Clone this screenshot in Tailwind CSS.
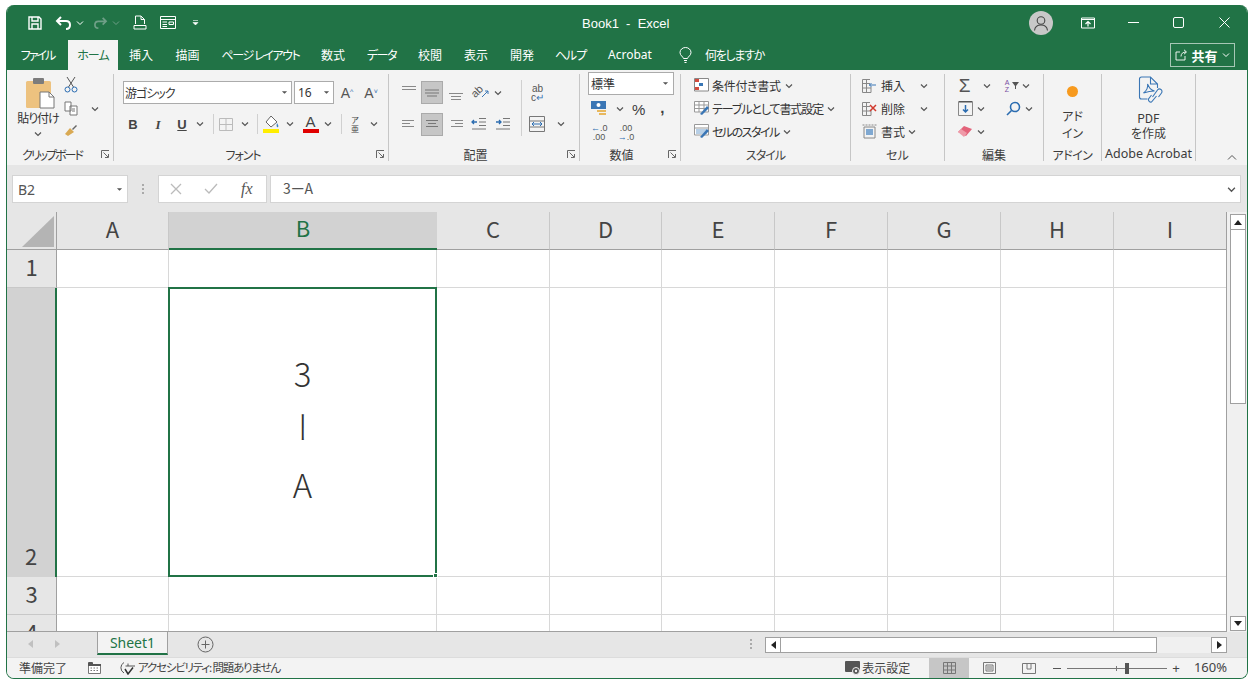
<!DOCTYPE html>
<html lang="ja">
<head>
  <meta charset="UTF-8" />
  <title>Book1 - Excel</title>
  <script src="https://cdn.jsdelivr.net/npm/@tailwindcss/browser@4"></script>
</head>
<body class="bg-white w-[1255px] h-[686px] overflow-hidden font-['Noto_Sans_CJK_JP','Noto_Sans',sans-serif] [font-feature-settings:'palt'] text-[#3c3c3c] text-[12px]">
  <svg class="hidden">
    <symbol id="chev" viewBox="0 0 8 8"><path d="M1 2.5 4 5.5 7 2.5" fill="none" stroke="#555" stroke-width="1.2"/></symbol>
    <symbol id="chevw" viewBox="0 0 8 8"><path d="M1 2.5 4 5.5 7 2.5" fill="none" stroke="#fff" stroke-width="1"/></symbol>
    <symbol id="chevd" viewBox="0 0 8 8"><path d="M1 2.5 4 5.5 7 2.5" fill="none" stroke="#6f9f87" stroke-width="1"/></symbol>
    <symbol id="tri" viewBox="0 0 8 8"><path d="M1 2.5H7L4 5.5Z" fill="#555"/></symbol>
    <symbol id="launcher" viewBox="0 0 9 9"><path d="M.5 8V.5H8M2.5 2.5 7 7M4 7.5H7.5V4" fill="none" stroke="#666"/></symbol>
  </svg>

  <div class="ml-[6px] mt-[5px] w-[1242px] h-[674px] rounded-[8px] overflow-hidden border-x border-b border-[#217346] flex flex-col bg-[#e6e6e6]">

    <!-- Title bar -->
    <div class="h-[35px] bg-[#217346] flex items-center text-white relative shrink-0">
      <div class="flex items-center pl-[21px]">
        <svg class="w-[14px] h-[14px]" viewBox="0 0 14 14" fill="none" stroke="#fff" stroke-width="1.4"><path d="M1 1H11L13 3V13H1ZM4 1V5H10V1M4 13V8H10V13"/></svg>
        <svg class="w-[17px] h-[14px] ml-[13px]" viewBox="0 0 17 14" fill="none" stroke="#fff" stroke-width="2"><path d="M6 1 2 5 6 9M2 5H11C14 5 15 7 15 9S14 13 11 13"/></svg>
        <svg class="w-[8px] h-[8px] ml-[4px]"><use href="#chevw"/></svg>
        <svg class="w-[15px] h-[12px] ml-[9px]" viewBox="0 0 17 14" fill="none" stroke="#6f9f87" stroke-width="2"><path d="M11 1 15 5 11 9M15 5H6C3 5 2 7 2 9S3 13 6 13"/></svg>
        <svg class="w-[8px] h-[8px] ml-[4px]"><use href="#chevd"/></svg>
        <svg class="w-[14px] h-[15px] ml-[13px]" viewBox="0 0 14 15" fill="none" stroke="#fff"><path d="M2.5 9V1H8L11.5 4.5V9M8 1V4.5H11.5M1 10.500H13V14H1Z"/></svg>
        <svg class="w-[16px] h-[13px] ml-[13px]" viewBox="0 0 16 13" fill="none" stroke="#fff"><path d="M.5.5H15.500V12.500H.5ZM.5 3.500H15.500M2.500 6H7M9 6H13.500V8.500H9ZM2.500 8.500H7M2.500 10.500H7"/></svg>
        <svg class="w-[7px] h-[7px] ml-[16px]" viewBox="0 0 7 7"><path d="M1 1.500H6M1 3.500H6L3.500 6Z" fill="#fff" stroke="#fff" stroke-width=".6"/></svg>
      </div>
      <div class="absolute left-[575px] top-[10px] text-[13px] leading-[18px] font-['Liberation_Sans',sans-serif] whitespace-pre">Book1  -  Excel</div>
      <div class="ml-auto flex items-center">
        <div class="w-[24px] h-[24px] rounded-full bg-[#c8c8c8] flex items-center justify-center">
          <svg class="w-[16px] h-[16px]" viewBox="0 0 16 16" fill="none" stroke="#444" stroke-width="1.100"><circle cx="8" cy="5.500" r="3.800"/><path d="M1.500 15.500C2 11.500 5 10 8 10S14 11.500 14.500 15.500"/></svg>
        </div>
        <svg class="w-[14px] h-[12px] ml-[28px]" viewBox="0 0 14 12" fill="none" stroke="#fff"><path d="M.5 1H13.500V11H.5ZM.5 2.500H13.500"/><path d="M7 9.500V5M4.500 7 7 4.500 9.500 7" stroke-width="1.200"/></svg>
        <div class="w-[11px] h-px bg-white ml-[33px]"></div>
        <div class="w-[11px] h-[11px] border border-white rounded-[2px] ml-[34px]"></div>
        <svg class="w-[11px] h-[11px] ml-[35px] mr-[17px]" viewBox="0 0 11 11" stroke="#fff"><path d="M.5.5 10.500 10.500M10.500.5.5 10.500"/></svg>
      </div>
    </div>

    <!-- Tabs -->
    <div class="h-[30px] bg-[#217346] flex text-white text-[12px] leading-[30px] text-center shrink-0 relative">
      <div class="w-[61px] tracking-[-2px]">ファイル</div>
      <div class="w-[50px] bg-[#f3f3f3] text-[#217346] tracking-[-1px]">ホーム</div>
      <div class="w-[46px]">挿入</div>
      <div class="w-[47px]">描画</div>
      <div class="w-[99px] whitespace-nowrap tracking-[-1.4px]">ページ レイアウト</div>
      <div class="w-[46px]">数式</div>
      <div class="w-[51px] tracking-[-1.500px]">データ</div>
      <div class="w-[46px]">校閲</div>
      <div class="w-[46px]">表示</div>
      <div class="w-[46px]">開発</div>
      <div class="w-[51px] tracking-[-1px]">ヘルプ</div>
      <div class="w-[68px] font-['Noto_Sans',sans-serif]">Acrobat</div>
      <div class="flex items-center ml-[15px]">
        <svg class="w-[13px] h-[16px]" viewBox="0 0 13 16" fill="none" stroke="#fff"><path d="M4.500 11.500C4 9.500 1 8.500 1 5.500A5.500 5 0 0 1 12 5.500C12 8.500 9 9.500 8.500 11.500ZM5 13.500H8M5.500 15.500H7.500"/></svg>
        <span class="ml-[13px] tracking-[-1.300px]">何をしますか</span>
      </div>
      <div class="ml-auto mr-[12px] mt-[3px] w-[65px] h-[24px] border border-white/60 flex items-center justify-center leading-none">
        <svg class="w-[13px] h-[12px]" viewBox="0 0 13 12" fill="none" stroke="#fff" stroke-width=".9"><path d="M5 3H1V11H10V7M6 7.500C6 4.500 8 3 11 3M9 .8 11.500 3 9 5.200"/></svg>
        <span class="text-[13px] font-bold ml-[3px]">共有</span>
        <svg class="w-[8px] h-[8px] ml-[4px]"><use href="#chevw"/></svg>
      </div>
    </div>

    <!-- Ribbon -->
    <div class="h-[95px] bg-[#f3f3f3] flex shrink-0 relative leading-none">

      <!-- clipboard -->
      <div class="w-[107px] shrink-0 border-r border-[#c6c6c6] my-[4px] relative flex flex-col">
        <div class="flex h-[74px]">
          <div class="w-[62px] flex flex-col items-center">
            <svg class="w-[31px] h-[32px] mt-[3px] ml-[4px]" viewBox="0 0 31 32"><rect x="1" y="4" width="25" height="27" rx="1.500" fill="#edc27f"/><rect x="8" y="1" width="11" height="6" rx="1" fill="#7c7c7c"/><path d="M15 15H24L29 20V31H15Z" fill="#fff" stroke="#777"/><path d="M24 15V20H29" fill="none" stroke="#777"/></svg>
            <div class="text-[12px] mt-[3px] text-[#333] whitespace-nowrap tracking-[-1px]">貼り付け</div>
            <svg class="w-[8px] h-[8px] mt-[6px]"><use href="#chev"/></svg>
          </div>
          <div class="flex flex-col items-center w-[14px] -ml-[5px]">
            <svg class="w-[14px] h-[17px] mt-[2px]" viewBox="0 0 14 17" fill="none" stroke="#555"><path d="M3 1 9.500 11M11 1 4.500 11"/><circle cx="3.500" cy="13.500" r="2.500" stroke="#2b6cb0"/><circle cx="10.500" cy="13.500" r="2.500" stroke="#2b6cb0"/></svg>
            <svg class="w-[14px] h-[15px] mt-[8px]" viewBox="0 0 14 15" fill="none" stroke="#777"><path d="M1 1H7V10H1ZM6 5H13V14H6Z" fill="#fff"/><path d="M8 8H11M8 10H11"/></svg>
            <svg class="w-[14px] h-[13px] mt-[8px]" viewBox="0 0 14 13"><path d="M8 5 12 1 13 2 9 6Z" fill="#666"/><path d="M1 10 6 4 10 8 4 12Z" fill="#d9a953"/></svg>
          </div>
          <svg class="w-[8px] h-[8px] mt-[31px] ml-[13px]"><use href="#chev"/></svg>
        </div>
        <div class="absolute -bottom-[2px] left-0 right-0 h-[17px] flex items-center">
          <span class="ml-[15px] text-[12px] tracking-[-2px] whitespace-nowrap">クリップボード</span>
        </div>
        <svg class="w-[9px] h-[9px] absolute right-[3px] bottom-[2px]"><use href="#launcher"/></svg>
      </div>

      <!-- font -->
      <div class="w-[275px] shrink-0 border-r border-[#c6c6c6] my-[4px] relative">
        <div class="flex items-center h-[23px] mt-[7px] pl-[9px]">
          <div class="w-[169px] h-[23px] bg-white border border-[#ababab] flex items-center pl-[1px] text-[12px] text-[#333] tracking-[-1px]">游ゴシック<svg class="w-[7px] h-[7px] ml-auto mr-[3px]"><use href="#tri"/></svg></div>
          <div class="w-[40px] h-[23px] ml-[2px] bg-white border border-[#ababab] flex items-center pl-[3px] text-[12px] font-['Noto_Sans',sans-serif] text-[#333]">16<svg class="w-[7px] h-[7px] ml-auto mr-[3px]"><use href="#tri"/></svg></div>
          <div class="w-[24px] ml-[1px] text-center text-[14px] text-[#555] font-['Liberation_Sans',sans-serif]">A<sup class="text-[7px] text-[#2b6cb0]">^</sup></div>
          <div class="w-[24px] text-center text-[14px] text-[#555] font-['Liberation_Sans',sans-serif]">A<sup class="text-[7px] text-[#2b6cb0]">˅</sup></div>
        </div>
        <div class="flex items-center h-[24px] mt-[8px] pl-[9px] font-['Liberation_Sans',sans-serif] text-[13px] text-[#444]">
          <div class="w-[20px] text-center font-bold">B</div>
          <div class="w-[24px] text-center font-['Liberation_Serif',serif] italic font-bold ml-[3px]">I</div>
          <div class="w-[24px] text-center underline font-bold">U</div>
          <svg class="w-[8px] h-[8px] ml-[2px]"><use href="#chev"/></svg>
          <div class="w-px h-[20px] bg-[#d0d0d0] ml-[9px]"></div>
          <svg class="w-[14px] h-[13px] ml-[5px]" viewBox="0 0 14 13" fill="none" stroke="#bbb"><path d="M.5.5H13.500V12.500H.5ZM7 .5V12.500M.5 6.500H13.500"/></svg>
          <svg class="w-[8px] h-[8px] ml-[8px]"><use href="#chev"/></svg>
          <div class="w-px h-[20px] bg-[#d0d0d0] ml-[8px]"></div>
          <svg class="w-[17px] h-[18px] ml-[5px]" viewBox="0 0 17 18"><path d="M8 1 14 7 8 12 3 7Z" fill="#fff" stroke="#666"/><path d="M14 8C15 10 16 11 15 12S13 11 14 8Z" fill="#3b82c4"/><rect y="14" width="16" height="4" fill="#ffee00"/></svg>
          <svg class="w-[8px] h-[8px] ml-[6px]"><use href="#chev"/></svg>
          <div class="w-[17px] ml-[8px] flex flex-col items-center text-[15px] leading-[14px]">A<div class="w-[16px] h-[4px] bg-[#e00000]"></div></div>
          <svg class="w-[8px] h-[8px] ml-[5px]"><use href="#chev"/></svg>
          <div class="w-px h-[20px] bg-[#d0d0d0] ml-[9px]"></div>
          <div class="w-[10px] ml-[8px] text-center text-[8px] leading-[9px] font-['Noto_Sans_CJK_JP']">ア<br>亜</div>
          <svg class="w-[8px] h-[8px] ml-[10px]"><use href="#chev"/></svg>
        </div>
        <div class="absolute -bottom-[2px] left-0 right-0 h-[17px] flex items-center justify-center text-[12px] pr-[16px] tracking-[-1px]">フォント</div>
        <svg class="w-[9px] h-[9px] absolute right-[3px] bottom-[2px]"><use href="#launcher"/></svg>
      </div>

      <!-- alignment -->
      <div class="w-[191px] shrink-0 border-r border-[#c6c6c6] my-[4px] relative">
        <div class="flex items-center h-[23px] mt-[7px] pl-[8px]">
          <svg class="w-[16px] h-[12px] ml-[4px] mb-[4px]" viewBox="0 0 16 12" stroke="#888"><path d="M1 1.500H15M1 4.500H15"/></svg>
          <div class="w-[22px] h-[23px] bg-[#c6c6c6] border border-[#aaa] ml-[4px] flex items-center justify-center"><svg class="w-[16px] h-[10px]" viewBox="0 0 16 10" stroke="#777"><path d="M1 2H15M1 5H15M3 8H13"/></svg></div>
          <svg class="w-[16px] h-[12px] ml-[5px] mt-[5px]" viewBox="0 0 16 12" stroke="#888"><path d="M1 4.500H15M3 7.500H13M3 10.500H13"/></svg>
          <div class="w-[18px] h-[16px] ml-[8px] relative">
            <span class="absolute left-[-1px] top-[1px] text-[11px] -rotate-45 font-['Liberation_Sans',sans-serif] text-[#555]">ab</span>
            <svg class="absolute left-0 top-0 w-[18px] h-[16px]" viewBox="0 0 18 16" fill="none" stroke="#3a76b5"><path d="M10 12 16 6M13 6H16V9"/></svg>
          </div>
          <svg class="w-[8px] h-[8px] ml-[4px]"><use href="#chev"/></svg>
          <div class="w-px h-[56px] bg-[#d0d0d0] ml-[19px] mt-[31px] shrink-0"></div>
          <div class="ml-[9px] text-[10px] leading-[9px] font-['Liberation_Sans',sans-serif] text-center text-[#555]">ab<br>c<span class="text-[#3a76b5]">↵</span></div>
        </div>
        <div class="flex items-center h-[24px] mt-[8px] pl-[8px]">
          <svg class="w-[16px] h-[10px] ml-[4px]" viewBox="0 0 16 10" stroke="#888"><path d="M1 1.500H13M1 4.500H9M1 7.500H13"/></svg>
          <div class="w-[22px] h-[23px] bg-[#c6c6c6] border border-[#aaa] ml-[4px] flex items-center justify-center"><svg class="w-[14px] h-[10px]" viewBox="0 0 14 10" stroke="#777"><path d="M1 1.500H13M3 4.500H11M1 7.500H13"/></svg></div>
          <svg class="w-[16px] h-[10px] ml-[5px]" viewBox="0 0 16 10" stroke="#888"><path d="M3 1.500H15M7 4.500H15M3 7.500H15"/></svg>
          <svg class="w-[16px] h-[14px] ml-[7px]" viewBox="0 0 16 14" stroke="#777" fill="none"><path d="M8 1.500H15M8 5H15M8 8.500H15M1 12H15"/><path d="M6 5H1M3 3 1 5 3 7" stroke="#2b6cb0" stroke-width="1.300"/></svg>
          <svg class="w-[16px] h-[14px] ml-[8px]" viewBox="0 0 16 14" stroke="#777" fill="none"><path d="M8 1.500H15M8 5H15M8 8.500H15M1 12H15"/><path d="M1 5H6M4 3 6 5 4 7" stroke="#2b6cb0" stroke-width="1.300"/></svg>
          <svg class="w-[16px] h-[16px] ml-[18px]" viewBox="0 0 16 16" fill="none" stroke="#777"><path d="M.5.5H15.500V15.500H.5ZM.5 5H15.500M.5 11H15.500"/><path d="M3 8H13M5 6 3 8 5 10M11 6 13 8 11 10" stroke="#2b6cb0"/></svg>
          <svg class="w-[8px] h-[8px] ml-[12px]"><use href="#chev"/></svg>
        </div>
        <div class="absolute -bottom-[2px] left-0 right-0 h-[17px] flex items-center justify-center text-[12px] pr-[17px]">配置</div>
        <svg class="w-[9px] h-[9px] absolute right-[3px] bottom-[2px]"><use href="#launcher"/></svg>
      </div>

      <!-- number -->
      <div class="w-[101px] shrink-0 border-r border-[#c6c6c6] my-[4px] relative">
        <div class="w-[86px] h-[23px] ml-[8px] -mt-[2px] bg-white border border-[#ababab] flex items-center pl-[2px] text-[12px] text-[#333]">標準<svg class="w-[7px] h-[7px] ml-auto mr-[4px]"><use href="#tri"/></svg></div>
        <div class="flex items-center h-[24px] mt-[2px] pl-[11px]">
          <svg class="w-[16px] h-[16px]" viewBox="0 0 16 16"><rect width="15" height="8" fill="#3a76b5"/><circle cx="7.500" cy="4" r="2" fill="#fff"/><rect x="6" y="9" width="9" height="2" fill="#e8b85e"/><rect x="8" y="12" width="7" height="2" fill="#e8b85e"/></svg>
          <svg class="w-[8px] h-[8px] ml-[9px]"><use href="#chev"/></svg>
          <span class="ml-[8px] text-[15px] font-['Liberation_Sans',sans-serif]">%</span>
          <span class="ml-[15px] text-[15px] font-bold font-['Liberation_Sans',sans-serif] -mt-[4px]">,</span>
        </div>
        <div class="flex items-center h-[24px] pl-[11px] text-[9px] leading-[9px] font-['Liberation_Sans',sans-serif] text-[#555]">
          <div class="w-[16px] text-center whitespace-nowrap"><span class="text-[#2b6cb0]">←</span>.0<br>.00</div>
          <div class="w-[20px] ml-[9px] text-center whitespace-nowrap">.00<br><span class="text-[#2b6cb0]">→</span>.0</div>
        </div>
        <div class="absolute -bottom-[2px] left-0 right-0 h-[17px] flex items-center justify-center text-[12px] pr-[17px]">数値</div>
        <svg class="w-[9px] h-[9px] absolute right-[3px] bottom-[2px]"><use href="#launcher"/></svg>
      </div>

      <!-- styles -->
      <div class="w-[170px] shrink-0 border-r border-[#c6c6c6] my-[4px] relative text-[12px] text-[#333]">
        <div class="flex items-center h-[23px] pl-[13px]">
          <svg class="w-[15px] h-[15px]" viewBox="0 0 15 15"><path d="M.5.5H14.500V13H.5Z" fill="#fff" stroke="#888"/><rect x="1" y="1" width="4" height="3" fill="#d24b3e"/><rect x="5" y="5" width="4" height="3" fill="#3a76b5"/><rect x="1" y="9" width="4" height="3" fill="#d24b3e"/></svg>
          <span class="ml-[3px] whitespace-nowrap tracking-[-.3px]">条件付き書式</span><svg class="w-[8px] h-[8px] ml-[4px]"><use href="#chev"/></svg>
        </div>
        <div class="flex items-center h-[23px] pl-[13px]">
          <svg class="w-[16px] h-[15px]" viewBox="0 0 16 15"><path d="M.5.5H14.500V11H.5ZM.5 4H14.500M.5 7.500H14.500M5 .5V11M10 .5V11" fill="#fff" stroke="#999"/><path d="M6 13 13 5 15 7 8 14Z" fill="#3a76b5"/></svg>
          <span class="ml-[2px] whitespace-nowrap tracking-[-1.100px]">テーブルとして書式設定</span><svg class="w-[8px] h-[8px] ml-[4px]"><use href="#chev"/></svg>
        </div>
        <div class="flex items-center h-[23px] pl-[13px]">
          <svg class="w-[16px] h-[15px]" viewBox="0 0 16 15"><path d="M.5.5H14.500V11H.5ZM.5 4H14.500" fill="#fff" stroke="#999"/><rect x="2" y="5" width="11" height="5" fill="#b7cfe6"/><path d="M6 13 13 5 15 7 8 14Z" fill="#3a76b5"/></svg>
          <span class="ml-[2px] whitespace-nowrap tracking-[-1.500px]">セルのスタイル</span><svg class="w-[8px] h-[8px] ml-[4px]"><use href="#chev"/></svg>
        </div>
        <div class="absolute -bottom-[2px] left-0 right-0 h-[17px] flex items-center justify-center text-[12px] text-[#444] tracking-[-1px]">スタイル</div>
      </div>

      <!-- cells -->
      <div class="w-[94px] shrink-0 border-r border-[#c6c6c6] my-[4px] relative text-[12px] text-[#333]">
        <div class="flex items-center h-[23px] pl-[11px]">
          <svg class="w-[15px] h-[14px]" viewBox="0 0 15 14" fill="none" stroke="#888"><path d="M.5.5H8M.5 4.500H8M.5.5V13.500H9V8M.5 9H9M4.500 .5V13.500"/><path d="M14 6H7M9.500 4 7.500 6 9.500 8" stroke="#3a76b5"/></svg>
          <span class="ml-[4px]">挿入</span><svg class="w-[8px] h-[8px] ml-[15px]"><use href="#chev"/></svg>
        </div>
        <div class="flex items-center h-[23px] pl-[11px]">
          <svg class="w-[15px] h-[14px]" viewBox="0 0 15 14" fill="none" stroke="#888"><path d="M.5.5H8M.5 4.500H8M.5.5V13.500H9V8M.5 9H9M4.500 .5V13.500"/><path d="M8 3 14 9M14 3 8 9" stroke="#d13a2e" stroke-width="1.500"/></svg>
          <span class="ml-[4px]">削除</span><svg class="w-[8px] h-[8px] ml-[15px]"><use href="#chev"/></svg>
        </div>
        <div class="flex items-center h-[23px] pl-[11px]">
          <svg class="w-[15px] h-[15px]" viewBox="0 0 15 15" fill="none" stroke="#888"><path d="M2 3H13V14H2Z"/><path d="M.5 1H14.500" stroke-dasharray="2 1"/><rect x="4" y="5" width="7" height="6" fill="#7fa8d1" stroke="none"/></svg>
          <span class="ml-[4px]">書式</span><svg class="w-[8px] h-[8px] ml-[3px]"><use href="#chev"/></svg>
        </div>
        <div class="absolute -bottom-[2px] left-0 right-0 h-[17px] flex items-center justify-center text-[12px] text-[#444]">セル</div>
      </div>

      <!-- editing -->
      <div class="w-[99px] shrink-0 border-r border-[#c6c6c6] my-[4px] relative">
        <div class="flex items-center h-[23px] pl-[12px]">
          <span class="w-[15px] text-[19px] text-center font-['Liberation_Sans',sans-serif] text-[#555]">Σ</span>
          <svg class="w-[8px] h-[8px] ml-[11px]"><use href="#chev"/></svg>
          <div class="w-[8px] ml-[12px] text-[7px] leading-[7px] text-[#7a4fa3] font-['Liberation_Sans',sans-serif] text-center">A<br>Z</div>
          <svg class="w-[7px] h-[7px] ml-[1px]" viewBox="0 0 7 7"><path d="M0 0H7L4 4V7H3V4Z" fill="#555"/></svg>
          <svg class="w-[8px] h-[8px] ml-[3px]"><use href="#chev"/></svg>
        </div>
        <div class="flex items-center h-[23px] pl-[13px]">
          <svg class="w-[15px] h-[15px]" viewBox="0 0 15 15" fill="none"><path d="M.5.5H14.500V14.500H.5Z" stroke="#888"/><path d="M1 .5H14" stroke="#555" stroke-width="2"/><path d="M7.500 4V11M5 8.500 7.500 11 10 8.500" stroke="#2b6cb0" stroke-width="1.500"/></svg>
          <svg class="w-[8px] h-[8px] ml-[4px]"><use href="#chev"/></svg>
          <svg class="w-[15px] h-[15px] ml-[21px]" viewBox="0 0 15 15" fill="none" stroke="#2b6cb0" stroke-width="1.600"><circle cx="9" cy="6" r="4.500"/><path d="M5.500 9.500 1 14"/></svg>
          <svg class="w-[8px] h-[8px] ml-[4px]"><use href="#chev"/></svg>
        </div>
        <div class="flex items-center h-[23px] pl-[13px]">
          <svg class="w-[15px] h-[11px]" viewBox="0 0 15 11"><path d="M0 6 6 0 14 3 8 10Z" fill="#e3637a"/><path d="M0 6 3 3 9 7 6 11Z" fill="#ef9aa8"/></svg>
          <svg class="w-[8px] h-[8px] ml-[4px]"><use href="#chev"/></svg>
        </div>
        <div class="absolute -bottom-[2px] left-0 right-0 h-[17px] flex items-center justify-center text-[12px]">編集</div>
      </div>

      <!-- add-in -->
      <div class="w-[58px] shrink-0 border-r border-[#c6c6c6] my-[4px] relative flex flex-col items-center">
        <div class="w-[11px] h-[11px] rounded-full bg-[#f79a1e] mt-[12px]"></div>
        <div class="text-center text-[12px] leading-[17px] mt-[10px]">アド<br>イン</div>
        <div class="absolute -bottom-[2px] left-0 right-0 h-[17px] flex items-center justify-center text-[12px] tracking-[-.5px]">アドイン</div>
      </div>

      <!-- acrobat -->
      <div class="w-[94px] shrink-0 border-r border-[#c6c6c6] my-[4px] relative flex flex-col items-center">
        <svg class="w-[27px] h-[29px] mt-[2px] ml-[3px]" viewBox="0 0 26 29" fill="none" stroke="#3a76b5" stroke-width="1.100"><path d="M10 23H4A2 2 0 0 1 2 21V3A2 2 0 0 1 4 1H13L20 8V12M13 1V8H20"/><path d="M6 17C9 15 11 11 10 8 12 12 13 14 17 15 12 15 9 16 6 17Z"/><path d="M15 21 20 14A2.500 2.500 0 0 1 24 17L21 21M19 20 14 26A2.500 2.500 0 0 1 11 23L14 19"/></svg>
        <div class="text-center text-[12px] leading-[15px] mt-[5px]">PDF<br>を作成</div>
        <div class="absolute -bottom-[2px] left-0 right-0 h-[17px] flex items-center justify-center text-[12.5px] whitespace-nowrap font-['Noto_Sans',sans-serif]">Adobe Acrobat</div>
      </div>

      <svg class="absolute right-[10px] bottom-[4px] w-[10px] h-[7px]" viewBox="0 0 10 7"><path d="M1 5.500 5 1.500 9 5.500" fill="none" stroke="#555"/></svg>
    </div>

    <!-- Formula bar -->
    <div class="h-[47px] flex items-start pt-[10px] pl-[5px] pr-[6px] shrink-0">
      <div class="w-[116px] h-[28px] bg-white border border-[#d4d4d4] flex items-center pl-[5px] text-[14px] text-[#555] font-['Noto_Sans',sans-serif]">B2<svg class="w-[7px] h-[7px] ml-auto mr-[4px]"><use href="#tri"/></svg></div>
      <div class="w-[30px] h-[28px] flex flex-col items-center justify-center gap-[2px]">
        <div class="w-[2px] h-[2px] bg-[#aaa]"></div><div class="w-[2px] h-[2px] bg-[#aaa]"></div><div class="w-[2px] h-[2px] bg-[#aaa]"></div>
      </div>
      <div class="w-[109px] h-[28px] bg-white border border-[#d4d4d4] flex items-center">
        <svg class="w-[12px] h-[12px] ml-[11px]" viewBox="0 0 12 12" stroke="#bbb" stroke-width="1.300"><path d="M1 1 11 11M11 1 1 11"/></svg>
        <svg class="w-[14px] h-[12px] ml-[22px]" viewBox="0 0 14 12" fill="none" stroke="#bbb" stroke-width="1.300"><path d="M1 6 5 10 13 1"/></svg>
        <span class="ml-[23px] font-['Liberation_Serif',serif] italic text-[16px] text-[#555]">fx</span>
      </div>
      <div class="flex-1 ml-[3px] h-[28px] bg-white border border-[#d4d4d4] flex items-center pl-[12px] text-[14px] text-[#555]"><span class="-mt-[2px]">3ーA</span><svg class="w-[9px] h-[9px] ml-auto mr-[4px]"><use href="#chev"/></svg></div>
    </div>

    <!-- Grid + vertical scrollbar -->
    <div class="h-[420px] flex shrink-0">
      <div id="grid" class="w-[1220px] shrink-0 h-[420px] relative overflow-hidden grid grid-cols-[50px_112px_268px_113px_112px_113px_113px_113px_113px_113px] grid-rows-[38px_38px_289px_38px_17px] bg-white text-[22px] text-[#444] leading-none border-b border-r border-[#a0a0a0]">
        <!-- corner -->
        <div class="bg-[#e6e6e6] border-r border-b border-[#a0a0a0] relative">
          <svg class="absolute right-[2px] bottom-[2px] w-[32px] h-[31px]" viewBox="0 0 32 31"><path d="M32 0V31H0Z" fill="#b4b4b4"/></svg>
        </div>
      </div>
      <div class="w-[21px] shrink-0 flex flex-col items-center pt-[2px] pb-[1px] bg-[#f0f0f0]">
        <div class="w-[16px] h-[16px] bg-white border border-[#a0a0a0] flex items-center justify-center"><svg class="w-[8px] h-[5px]" viewBox="0 0 8 5"><path d="M0 5H8L4 0Z" fill="#222"/></svg></div>
        <div class="w-[16px] h-[174px] bg-white border border-[#a0a0a0] border-t-0"></div>
        <div class="flex-1"></div>
        <div class="w-[16px] h-[15px] bg-white border border-[#a0a0a0] flex items-center justify-center"><svg class="w-[8px] h-[5px]" viewBox="0 0 8 5"><path d="M0 0H8L4 5Z" fill="#222"/></svg></div>
      </div>
    </div>

    <!-- Sheet tabs + horizontal scrollbar -->
    <div class="h-[25px] flex items-start shrink-0 bg-[#e6e6e6]">
      <div class="w-[90px] h-[24px] flex items-center">
        <svg class="w-[6px] h-[8px] ml-[21px]" viewBox="0 0 6 8"><path d="M5 0V8L0 4Z" fill="#c0c0c0"/></svg>
        <svg class="w-[6px] h-[8px] ml-[20px]" viewBox="0 0 6 8"><path d="M1 0V8L6 4Z" fill="#c0c0c0"/></svg>
      </div>
      <div class="w-[71px] h-[23px] bg-[#f3f3f3] border-x border-[#a0a0a0] border-b-2 border-b-[#217346] text-center leading-[21px] text-[14px] text-[#217346] font-['Noto_Sans',sans-serif]">Sheet1</div>
      <svg class="w-[17px] h-[17px] ml-[29px] mt-[4px]" viewBox="0 0 17 17" fill="none" stroke="#666"><circle cx="8.500" cy="8.500" r="7.500"/><path d="M8.500 4.500V12.500M4.500 8.500H12.500"/></svg>
      <div class="w-[2px] ml-[536px] mt-[7px] flex flex-col gap-[2px]">
        <div class="w-[2px] h-[2px] bg-[#aaa]"></div><div class="w-[2px] h-[2px] bg-[#aaa]"></div><div class="w-[2px] h-[2px] bg-[#aaa]"></div>
      </div>
      <div class="ml-[13px] mt-[5px] w-[462px] h-[16px] bg-[#f0f0f0] flex">
        <div class="w-[16px] h-[16px] bg-white border border-[#a0a0a0] flex items-center justify-center"><svg class="w-[5px] h-[8px]" viewBox="0 0 5 8"><path d="M5 0V8L0 4Z" fill="#222"/></svg></div>
        <div class="w-[376px] h-[16px] bg-white border border-l-0 border-[#a0a0a0]"></div>
        <div class="w-[16px] h-[16px] ml-auto bg-white border border-[#a0a0a0] flex items-center justify-center"><svg class="w-[5px] h-[8px]" viewBox="0 0 5 8"><path d="M0 0V8L5 4Z" fill="#222"/></svg></div>
      </div>
    </div>

    <!-- Status bar -->
    <div class="flex-1 bg-[#f3f3f3] flex items-center border-t border-[#dcdcdc] text-[12px] text-[#444]">
      <span class="ml-[12px]">準備完了</span>
      <svg class="w-[13px] h-[12px] ml-[21px]" viewBox="0 0 13 12"><path d="M.5 3H12.500V11.500H.5Z" fill="#fff" stroke="#777"/><rect x="0" y="0" width="5" height="3" rx="1" fill="#555"/><rect x="0" y="2" width="13" height="2" fill="#555"/><path d="M2.500 6H4M5.500 6H7M8.500 6H10M2.500 8.500H4M5.500 8.500H7M8.500 8.500H10" stroke="#777"/></svg>
      <svg class="w-[16px] h-[14px] ml-[19px]" viewBox="0 0 16 14" fill="none" stroke="#555"><path d="M4 1.500A6 6 0 0 0 4 12"/><path d="M8 2.500V5M5.500 5H15"/><path d="M5 8 8 13 13 6.500" stroke-width="1.500" stroke="#333"/></svg>
      <span class="ml-[2px] text-[11.500px] tracking-[-1.200px] whitespace-nowrap">アクセシビリティ: 問題ありません</span>
      <div class="ml-auto flex items-center h-full">
        <svg class="w-[16px] h-[15px]" viewBox="0 0 16 15"><rect width="15" height="11" rx="1" fill="#555"/><circle cx="11" cy="10" r="3.500" fill="#555" stroke="#f3f3f3"/><circle cx="11" cy="10" r="1.200" fill="#f3f3f3"/></svg>
        <span class="ml-[1px]">表示設定</span>
        <div class="w-[40px] h-full bg-[#c6c6c6] ml-[19px] flex items-center justify-center"><svg class="w-[13px] h-[12px]" viewBox="0 0 13 12" fill="none" stroke="#777"><path d="M.5.500H12.500V11.500H.5ZM4.500.500V11.500M8.500.500V11.500M.5 4H12.500M.5 8H12.500"/></svg></div>
        <svg class="w-[13px] h-[12px] ml-[14px]" viewBox="0 0 13 12" fill="none" stroke="#777"><path d="M.5.500H12.500V11.500H.5ZM3 3H10V9H3ZM4 5H9M4 7H9"/></svg>
        <svg class="w-[14px] h-[11px] ml-[26px]" viewBox="0 0 14 11" fill="none" stroke="#777"><path d="M.5 .5H13.500V10.500H.5ZM5 .5V6H9V.5"/></svg>
        <div class="w-[8px] h-px bg-[#555] ml-[17px]"></div>
        <div class="w-[100px] h-px bg-[#777] ml-[6px] relative">
          <div class="absolute left-[49px] top-[-2px] w-px h-[5px] bg-[#777]"></div>
          <div class="absolute left-[58px] top-[-5px] w-[4px] h-[11px] bg-[#555]"></div>
        </div>
        <span class="ml-[5px] text-[13px] leading-none font-['Liberation_Sans',sans-serif]">+</span>
        <span class="ml-[14px] mr-[20px] text-[13px] font-['Noto_Sans',sans-serif] whitespace-nowrap">160%</span>
      </div>
    </div>
  </div>

  <script>
    // fill the sheet: header row, row numbers and empty cells
    const grid = document.getElementById('grid');
    const cols = ['A', 'B', 'C', 'D', 'E', 'F', 'G', 'H', 'I'];
    let html = '';
    cols.forEach((c, i) => {
      html += i === 1
        ? `<div class="flex items-center justify-center pb-[6px] bg-[#d2d2d2] border-b-2 border-[#217346] text-[#217346]">${c}</div>`
        : `<div class="flex items-center justify-center pb-[6px] bg-[#e6e6e6] border-r border-r-[#c8c8c8] border-b border-b-[#a0a0a0]">${c}</div>`;
    });
    [1, 2, 3, 4].forEach(r => {
      html += r === 2
        ? `<div class="flex items-end justify-center pb-[11px] bg-[#d2d2d2] border-r-2 border-[#217346]">${r}</div>`
        : `<div class="flex ${r === 4 ? 'items-start pt-[5px]' : 'items-center pb-[5px]'} justify-center bg-[#e6e6e6] border-r border-r-[#a0a0a0] border-b border-b-[#c8c8c8]">${r}</div>`;
      cols.forEach(() => { html += '<div class="border-r border-b border-[#d8d8d8]"></div>'; });
    });
    grid.insertAdjacentHTML('beforeend', html);
  </script>
  <!-- B2 selection sits over the grid -->
  <div class="absolute left-[168px] top-[287px] w-[269px] h-[290px] border-2 border-[#217346] flex flex-col items-center text-[#333] text-[33px] leading-none font-light">
    <span class="mt-[68px]">3</span>
    <span class="mt-[21px] [writing-mode:vertical-rl] [text-orientation:upright] h-[33px]">ー</span>
    <span class="mt-[24px]">A</span>
    <div class="absolute -right-[3px] -bottom-[3px] w-[5px] h-[5px] bg-[#217346] border border-white"></div>
  </div>
</body>
</html>
